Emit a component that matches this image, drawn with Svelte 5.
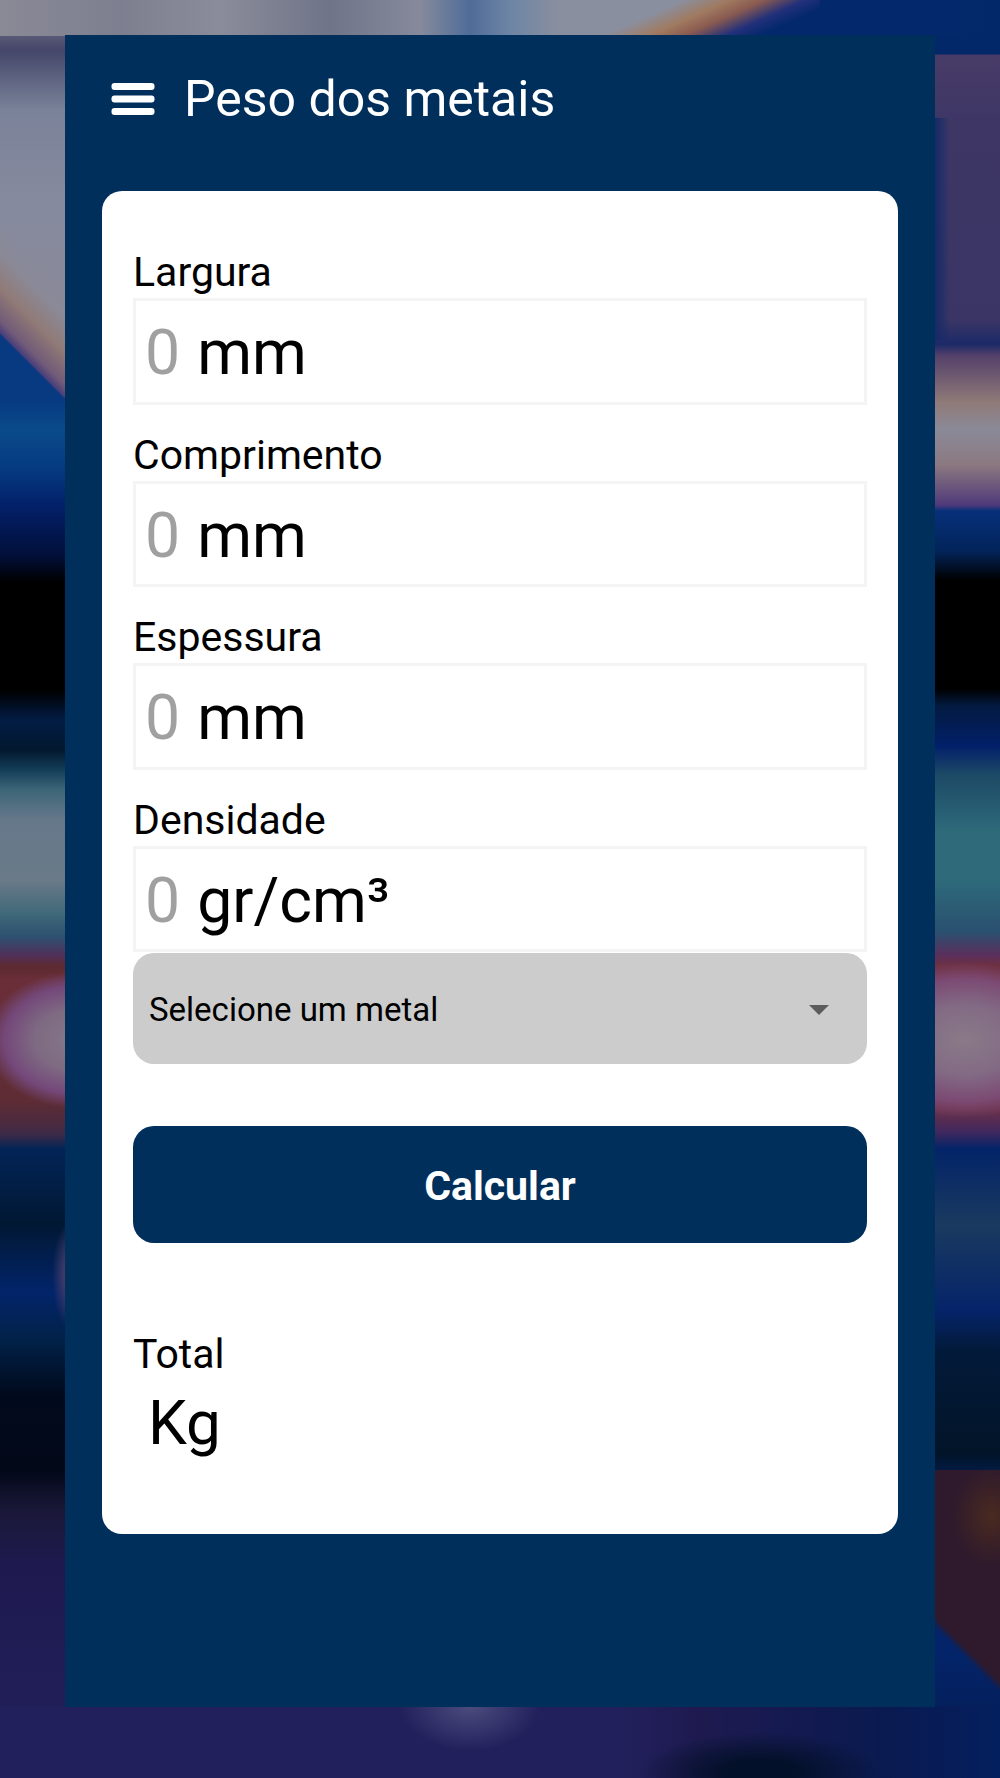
<script>
  const fields = [
    { label: 'Largura', unit: 'mm' },
    { label: 'Comprimento', unit: 'mm' },
    { label: 'Espessura', unit: 'mm' },
    { label: 'Densidade', unit: 'gr/cm³' }
  ];
</script>

<div class="screen">
  <main class="panel">
    <header class="bar">
      <svg class="menu" width="44" height="32" viewBox="0 0 44 32" aria-hidden="true">
        <rect x="0.5" y="0" width="43" height="7" rx="3" />
        <rect x="0.5" y="12.5" width="43" height="7" rx="3" />
        <rect x="0.5" y="25" width="43" height="7" rx="3" />
      </svg>
      <h1>Peso dos metais</h1>
    </header>

    <section class="card">
      {#each fields as f}
        <div class="field">
          <div class="label">{f.label}</div>
          <div class="input"><span class="ph">0</span><span class="unit">{f.unit}</span></div>
        </div>
      {/each}

      <div class="select">
        <span>Selecione um metal</span>
        <svg width="20" height="10" viewBox="0 0 20 10" aria-hidden="true"><path d="M0 0H20L10 10Z" /></svg>
      </div>

      <button class="calc" type="button">Calcular</button>

      <div class="total">
        <div class="label">Total</div>
        <div class="value">Kg</div>
      </div>
    </section>
  </main>
</div>

<style>
  :global(body) {
    margin: 0;
    background: #000;
  }

  .screen {
    box-sizing: border-box;
    width: 1000px;
    height: 1778px;
    padding: 35px 65px 71px;
    font-family: Roboto, sans-serif;
    background-repeat: no-repeat;
    background-image:
      linear-gradient(156deg, #8a8f9f 36%, #a07a60 50%, #8a5a50 60%, #22307a 72%, #04286c 82%),
      linear-gradient(90deg, #8a8a96 0, #7d7f90 120px, #8b8c9a 220px, #6f7488 330px, #868a9c 420px, #4f6c98 470px, #6d85a5 510px, #8a8f9f 560px, #8a8f9f 600px, #04286c 820px, #02286a 1000px),
      radial-gradient(70px 45px at 470px 0, #4c4c7e 0, rgba(60, 60, 110, 0) 100%),
      radial-gradient(120px 40px at 760px 66px, #03102a 30%, rgba(3, 16, 42, 0) 100%),
      linear-gradient(90deg, #22205c 0, #22205c 620px, #1e1a50 700px, #0a1a50 880px, #041f5e 1000px),
      radial-gradient(20px 55px at 72px 1275px, #3d3a68 0 40%, rgba(30, 30, 70, 0) 100%),
      radial-gradient(44px 60px at 930px 1270px, #453f78 0 50%, rgba(50, 60, 110, 0) 100%),
      radial-gradient(44px 50px at 930px 1370px, #44426a 0 50%, rgba(50, 60, 110, 0) 100%),
      radial-gradient(60px 90px at 925px 860px, #74808f 0 30%, rgba(116, 128, 143, 0) 100%),
      radial-gradient(40px 50px at 57px 1516px, #4a2a20 0, rgba(74, 42, 32, 0) 100%),
      linear-gradient(45deg, transparent 39%, #2e1a2c 42%),
      linear-gradient(225deg, transparent 0, transparent 62%, #8a8a98 68%, #907a76 76%, #705a78 83%, #4a3f7a 85.4%, #073a80 86%),
      radial-gradient(90px 68px at 75px 1040px, #85788a 0, #7e6a82 45%, #74487a 78%, rgba(110, 60, 110, 0) 100%),
      radial-gradient(115px 78px at 30px 1040px, #8a7a88 0, #826a84 45%, #7c4a74 78%, rgba(110, 60, 110, 0) 100%),
      linear-gradient(90deg, #152a68 0, rgba(21, 42, 104, 0) 15px),
      linear-gradient(180deg, #8a8a96 0, #6f7085 20px, #45466a 50px, #5a607e 75px, #7a8299 110px, #868a9e 200px, #8a8a98 340px, #073a80 341px, #073a80 400px, #0a4a8a 430px, #053a80 470px, #03206a 505px, #02103a 555px, #000 582px, #000 690px, #031c44 720px, #01182e 750px, #143e58 770px, #3d6678 790px, #65788a 820px, #6a7a88 880px, #3e6878 915px, #2d5070 937px, #50305a 955px, #5c2a30 966px, #6a2e38 980px, #5e2c34 1100px, #4a2a40 1125px, #3a2a48 1135px, #022456 1149px, #011833 1224px, #02246a 1292px, #02224a 1338px, #010a1c 1395px, #020818 1470px, #1a1838 1510px, #1e1a50 1567px, #22205c 1778px),
      linear-gradient(180deg, #02286a 0, #02286a 54px, #483b68 55px, #3e3765 118px, #3a3565 320px, #1b2a68 344px, #55406a 356px, #8f7a78 402px, #8a8a98 430px, #8c7880 465px, #503a7a 505px, #06307a 511px, #03245a 551px, #000 580px, #000 689px, #031a40 706px, #02206a 746px, #1d4a66 775px, #2e6a7a 832px, #2e6a7a 880px, #2a5070 932px, #5a2f5c 955px, #6e3040 966px, #74303e 985px, #6b3048 1109px, #40285e 1132px, #032468 1149px, #1a3a60 1224px, #05246a 1310px, #021a3a 1350px, #021428 1453px, #021e50 1480px, #03246a 1650px, #04205e 1700px, #031a3a 1778px);
    background-size:
      260px 36px,
      100% 36px,
      100% 72px,
      100% 72px,
      100% 72px,
      65px 100%,
      65px 100%,
      65px 100%,
      65px 100%,
      65px 100%,
      65px 300px,
      65px 400px,
      65px 100%,
      65px 100%,
      65px 222px,
      65px 100%,
      65px 100%;
    background-position:
      560px 0,
      0 0,
      0 100%,
      0 100%,
      0 100%,
      0 0,
      100% 0,
      100% 0,
      100% 0,
      100% 0,
      100% 1470px,
      0 0,
      0 0,
      100% 0,
      100% 118px,
      0 0,
      100% 0;
  }

  .panel {
    box-sizing: border-box;
    height: 100%;
    padding: 0 37px;
    background: #012f5c;
  }

  .bar {
    display: flex;
    align-items: center;
    gap: 29px;
    height: 156px;
    padding: 0 0 28px 9px;
    box-sizing: border-box;
    color: #fff;
  }

  .menu {
    fill: #fff;
    flex: none;
  }

  h1 {
    margin: 0;
    font-size: 50px;
    font-weight: 400;
    line-height: 1;
  }

  .card {
    box-sizing: border-box;
    height: 1343px;
    padding: 31px 31px 0;
    background: #fff;
    border-radius: 20px;
    color: #000;
  }

  .label {
    box-sizing: border-box;
    height: 76px;
    padding-top: 24px;
    font-size: 41px;
    line-height: 52px;
  }

  .input {
    box-sizing: border-box;
    display: flex;
    align-items: center;
    gap: 17px;
    height: 106.6px;
    padding: 4px 0 0 9px;
    border: 3px solid #f4f4f4;
    font-size: 62.5px;
    line-height: 1;
  }

  .ph {
    color: #a0a0a0;
  }

  .select {
    box-sizing: border-box;
    display: flex;
    align-items: center;
    justify-content: space-between;
    height: 111.6px;
    margin-top: 0.4px;
    padding: 2px 38px 0 16px;
    background: #ccc;
    border-radius: 21px;
    font-size: 33px;
  }

  .select svg {
    fill: #5c5c5c;
    flex: none;
  }

  .calc {
    display: block;
    width: 100%;
    height: 117px;
    margin-top: 62px;
    padding: 3px 0 0;
    border: 0;
    border-radius: 21px;
    background: #012f5c;
    color: #fff;
    font: 700 41px Roboto, sans-serif;
  }

  .total {
    margin-top: 61px;
  }

  .value {
    margin-top: 8px;
    padding-left: 15px;
    font-size: 62px;
    line-height: 70px;
  }
</style>
